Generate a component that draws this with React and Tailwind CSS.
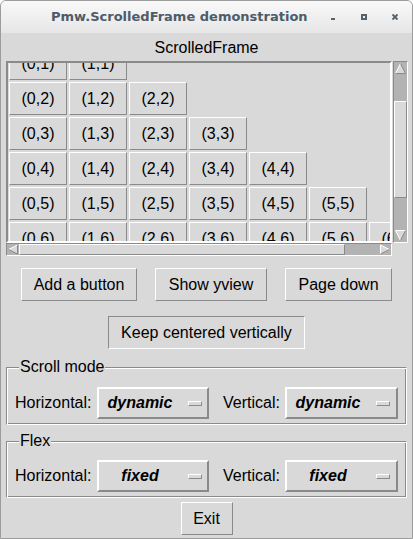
import React from "react";

const raised =
  "border border-t-white border-l-white border-r-[#8a8a8a] border-b-[#8a8a8a]";
const sunken =
  "border border-t-[#8a8a8a] border-l-[#8a8a8a] border-r-white border-b-white";

function UpArrow() {
  return (
    <svg width="13" height="13" viewBox="0 0 13 13" className="shrink-0">
      <polygon points="6.5,1.5 1.5,11.5 11.5,11.5" fill="#d9d9d9" />
      <line x1="6.5" y1="1.5" x2="1.5" y2="11.5" stroke="#fff" />
      <line x1="6.5" y1="1.5" x2="11.5" y2="11.5" stroke="#8a8a8a" />
      <line x1="1.5" y1="11.5" x2="11.5" y2="11.5" stroke="#8a8a8a" />
    </svg>
  );
}

function DownArrow() {
  return (
    <svg width="13" height="13" viewBox="0 0 13 13" className="shrink-0">
      <polygon points="1.5,1.5 11.5,1.5 6.5,11.5" fill="#d9d9d9" />
      <line x1="1.5" y1="1.5" x2="11.5" y2="1.5" stroke="#fff" />
      <line x1="1.5" y1="1.5" x2="6.5" y2="11.5" stroke="#fff" />
      <line x1="11.5" y1="1.5" x2="6.5" y2="11.5" stroke="#8a8a8a" />
    </svg>
  );
}

function LeftArrow() {
  return (
    <svg width="12" height="11" viewBox="0 0 12 11" className="shrink-0">
      <polygon points="1.5,5.5 10.5,1 10.5,10" fill="#d9d9d9" />
      <line x1="1.5" y1="5.5" x2="10.5" y2="1" stroke="#fff" />
      <line x1="1.5" y1="5.5" x2="10.5" y2="10" stroke="#8a8a8a" />
      <line x1="10.5" y1="1" x2="10.5" y2="10" stroke="#8a8a8a" />
    </svg>
  );
}

function RightArrow() {
  return (
    <svg width="12" height="11" viewBox="0 0 12 11" className="shrink-0">
      <polygon points="1.5,1 10.5,5.5 1.5,10" fill="#d9d9d9" />
      <line x1="1.5" y1="1" x2="1.5" y2="10" stroke="#fff" />
      <line x1="1.5" y1="1" x2="10.5" y2="5.5" stroke="#fff" />
      <line x1="1.5" y1="10" x2="10.5" y2="5.5" stroke="#8a8a8a" />
    </svg>
  );
}

function OptionMenu({ value, width }) {
  return (
    <div
      className={`flex h-[32px] items-center border-2 border-t-white border-l-white border-r-[#8a8a8a] border-b-[#8a8a8a] ${width}`}
    >
      <span className="w-[82px] text-center text-[16px] font-bold italic">
        {value}
      </span>
      <span className="ml-[7px] h-[5px] w-[14px] border border-t-white border-l-white border-r-[#8a8a8a] border-b-[#8a8a8a]" />
    </div>
  );
}

function Group({ title, value, className, rowClass }) {
  return (
    <fieldset
      className={`mx-[5px] border border-t-[#8a8a8a] border-l-[#8a8a8a] border-r-white border-b-white pb-[5px] shadow-[inset_1px_1px_0_#fff,inset_-1px_-1px_0_#8a8a8a] ${className}`}
    >
      <legend className="ml-[12px] bg-[#d9d9d9] px-[1px] text-[16px] leading-[18px]">
        {title}
      </legend>
      <div className={`flex items-center pl-[8px] text-[16px] ${rowClass}`}>
        <span className="w-[82px]">Horizontal:</span>
        <OptionMenu value={value} width="w-[112px]" />
        <span className="ml-[14px] w-[62px]">Vertical:</span>
        <OptionMenu value={value} width="w-[113px]" />
      </div>
    </fieldset>
  );
}

const rows = [0, 1, 2, 3, 4, 5, 6];

export default function App() {
  return (
    <div className="flex h-[539px] w-[413px] flex-col overflow-hidden rounded-t-[6px] border border-[#9c9c9c] bg-[#d9d9d9] text-black [font-family:'Liberation_Sans',Arial,sans-serif]">
      {/* title bar */}
      <div className="flex h-[32px] shrink-0 items-center bg-linear-to-b from-[#f9f9f9] to-[#e6e6e6]">
        <span className="pl-[50px] text-[13px] font-bold text-[#4e5b68] [font-family:'DejaVu_Sans',sans-serif]">
          Pmw.ScrolledFrame demonstration
        </span>
        <div className="ml-auto flex items-center gap-[23px] pr-[13px]">
          <svg width="8" height="8" viewBox="0 0 8 8">
            <rect x="2" y="5" width="4" height="2" fill="#56616c" />
          </svg>
          <svg width="8" height="8" viewBox="0 0 8 8">
            <rect x="2" y="2" width="4" height="4" fill="none" stroke="#56616c" strokeWidth="2" />
          </svg>
          <svg width="8" height="8" viewBox="0 0 8 8">
            <path d="M1.5 1.5 L6.5 6.5 M6.5 1.5 L1.5 6.5" stroke="#56616c" strokeWidth="1.8" />
          </svg>
        </div>
      </div>

      <div className="mt-[6px] text-center text-[16px] leading-[18px]">ScrolledFrame</div>

      {/* scrolled frame */}
      <div className="mt-[4px] ml-[5px] flex gap-[1px]">
        <div className="h-[182px] w-[386px] overflow-hidden border-2 border-t-[#8a8a8a] border-l-[#8a8a8a] border-r-white border-b-white">
          <div className="mt-[-51px] ml-[1px] flex flex-col gap-[2px]">
            {rows.map((r) => (
              <div key={r} className="flex gap-[2px]">
                {rows
                  .filter((c) => c <= r)
                  .map((c) => (
                    <div
                      key={c}
                      className={`flex h-[33px] w-[58px] shrink-0 items-center justify-center text-[16px] ${raised}`}
                    >
                      ({c},{r})
                    </div>
                  ))}
              </div>
            ))}
          </div>
        </div>
        <div className={`flex h-[182px] w-[15px] flex-col bg-[#b3b3b3] ${sunken}`}>
          <UpArrow />
          <div className="h-[26px]" />
          <div className={`h-[97px] bg-[#d9d9d9] ${raised}`} />
          <div className="flex-1" />
          <DownArrow />
        </div>
      </div>
      <div className={`ml-[5px] flex h-[13px] w-[386px] bg-[#b3b3b3] ${sunken}`}>
        <LeftArrow />
        <div className={`w-[326px] bg-[#d9d9d9] ${raised}`} />
        <div className="flex-1" />
        <RightArrow />
      </div>

      {/* buttons */}
      <div className="mt-[12px] flex justify-center gap-[18px] text-[16px]">
        <button className={`h-[33px] w-[116px] ${raised}`}>Add a button</button>
        <button className={`h-[33px] w-[112px] ${raised}`}>Show yview</button>
        <button className={`h-[33px] w-[107px] ${raised}`}>Page down</button>
      </div>
      <div className="mt-[15px] flex justify-center text-[16px]">
        <button className={`h-[33px] w-[197px] ${sunken}`}>Keep centered vertically</button>
      </div>

      <Group title="Scroll mode" value="dynamic" className="mt-[9px]" rowClass="mt-[11px]" />
      <Group title="Flex" value="fixed" className="mt-[7px]" rowClass="mt-[10px]" />

      <div className="mt-[4px] flex justify-center text-[16px]">
        <button className={`h-[33px] w-[52px] ${raised}`}>Exit</button>
      </div>
    </div>
  );
}
